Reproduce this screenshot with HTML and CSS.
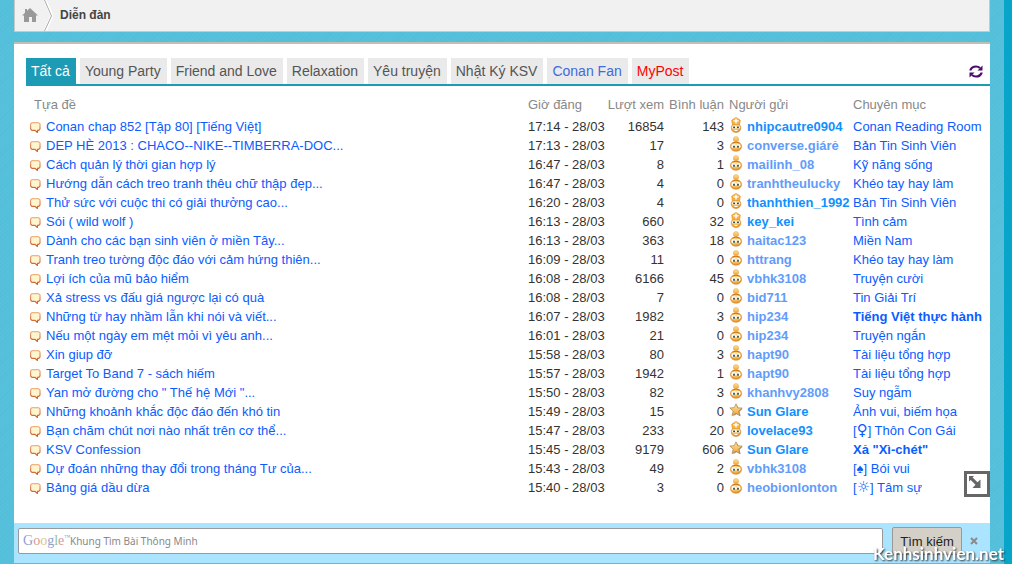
FILE: index.html
```html
<!DOCTYPE html>
<html lang="vi">
<head>
<meta charset="utf-8">
<meta name="viewport" content="width=device-width, initial-scale=1">
<title>Diễn đàn</title>
<link rel="stylesheet" href="styles.css">
</head>
<body>
<svg class="sprite" width="0" height="0" aria-hidden="true">
  <defs>
    <linearGradient id="bubble-line" x1="0" y1="0" x2="0" y2="1"><stop offset="0" stop-color="#efb487"/><stop offset="1" stop-color="#c95a28"/></linearGradient>
    <linearGradient id="gold" x1="0" y1="0" x2="0" y2="1"><stop offset="0" stop-color="#ffe9a6"/><stop offset="1" stop-color="#f0a030"/></linearGradient>
    <radialGradient id="face" cx=".45" cy=".35" r=".7"><stop offset="0" stop-color="#ffe6a0"/><stop offset=".6" stop-color="#f6b54e"/><stop offset="1" stop-color="#d9801a"/></radialGradient>
    <symbol id="bubble" viewBox="0 0 11 11"><path d="M2 .6h6.500L10 2v5L8.700 8.400H7.600L7.300 10.400 5 8.400H2L.6 7V2z" fill="#fff6cf" stroke="url(#bubble-line)" stroke-width="1.200"/></symbol>
    <symbol id="member" viewBox="0 0 12 16"><path d="M6 6c3.800 0 5.600 2 5.600 4.400S9.500 15.200 6 15.200.4 12.800.4 10.400 2.200 6 6 6z" fill="url(#face)" stroke="#d98a2c" stroke-width=".6"/><path d="M2.500 7Q6 5.300 9.500 7" fill="none" stroke="#c8741a"/><circle cx="6" cy="3.200" r="2.600" fill="url(#gold)" stroke="#eba23a" stroke-width=".6"/><circle cx="3.600" cy="10.200" r="2.100" fill="#fff"/><circle cx="8.400" cy="10.200" r="2.100" fill="#fff"/><path d="M3.200 9.800h1.600v2H3.200zM7.200 9.800h1.600v2H7.200z" fill="#173f35"/></symbol>
    <symbol id="bishop" viewBox="0 0 12 16"><path d="M6 6.500c3 0 4.800 2 4.800 4.400S9 15.400 6 15.400 1.200 13.300 1.200 10.900 3 6.500 6 6.500z" fill="url(#face)" stroke="#d98a2c" stroke-width=".6"/><path d="M2.500 8 1.700 3.200 6 .4l4.300 2.800L9.500 8Q6 6.600 2.500 8z" fill="#f8b03c" stroke="#e59326" stroke-width=".7"/><path d="M6 1.400v5M3.300 3.900h5.400" stroke="#fff" stroke-width="1.400"/><circle cx="3.900" cy="10.200" r="1.700" fill="#fff"/><circle cx="8.100" cy="10.200" r="1.700" fill="#fff"/><path d="M3.200 10.300h1.700M7.100 10.300h1.700" stroke="#173f35" stroke-width="1.700"/><path d="M4.500 13.500h3" stroke="#fff"/></symbol>
    <symbol id="star" viewBox="0 0 14 14"><path d="m8 2 1.600 3.500 4 .3-3 2.900 1 4.500L8 11l-3.800 2.200" fill="#777" opacity=".7"/><path d="m7 .8 1.700 4 4.500.3-3.500 3 1.200 4.600L7 10.300l-4 2.300 1.200-4.500L.8 5l4.400-.3z" fill="url(#gold)" stroke="#a58352" stroke-width=".7" stroke-linejoin="round"/></symbol>
  </defs>
</svg>
<div class="page">
  <nav class="crumbs" aria-label="Breadcrumb">
    <a class="home" href="#" aria-label="Trang chủ"><svg width="16" height="14" viewBox="0 0 16 14"><path d="M8 0 16 7.500h-2V14h-4V9H7v5H2V7.500H0L3 4.700V1h2v1.800z" fill="#999"/></svg></a>
    <svg class="chevron" width="9" height="31" viewBox="0 0 9 31" aria-hidden="true"><path d="M1 0 8 16 1 31" fill="none" stroke="#fff" stroke-width="3"/><path d="M.5 0 7.500 16 .5 31" fill="none" stroke="#aaa"/></svg>
    <a class="crumb" href="#">Diễn đàn</a>
  </nav>

  <main class="panel">
    <div class="tabs">
      <button class="tab active" type="button">Tất cả</button>
      <button class="tab" type="button">Young Party</button>
      <button class="tab" type="button">Friend and Love</button>
      <button class="tab" type="button">Relaxation</button>
      <button class="tab" type="button">Yêu truyện</button>
      <button class="tab" type="button">Nhật Ký KSV</button>
      <button class="tab conan" type="button">Conan Fan</button>
      <button class="tab mine" type="button">MyPost</button>
      <button class="refresh" type="button" aria-label="Làm mới"><svg width="14" height="13" viewBox="0 0 14 13"><path d="M1.500 5.500V5C2.400 2.800 4.500 1.500 7 1.500c1.700 0 3 .5 4 1.500M12.500 7.500V8c-.9 2.200-3 3.500-5.500 3.500-1.700 0-3-.5-4-1.500" fill="none" stroke="#4b0f6b" stroke-width="2.200"/><path d="M13.500.5v5h-5zM.5 12.500v-5h5z" fill="#4b0f6b"/></svg></button>
    </div>

    <table class="topics">
      <colgroup><col><col class="c-date"><col class="c-views"><col class="c-replies"><col class="c-user"><col class="c-forum"></colgroup>
      <thead><tr><th class="title-head">Tựa đề</th><th>Giờ đăng</th><th class="num">Lượt xem</th><th class="num">Bình luận</th><th class="user">Người gửi</th><th>Chuyên mục</th></tr></thead>
      <tbody>
      <tr><td><svg class="bubble"><use href="#bubble"/></svg><a href="#">Conan chap 852 [Tập 80] [Tiếng Việt]</a></td><td>17:14 - 28/03</td><td class="num">16854</td><td class="num">143</td><td class="user vip"><svg class="rank"><use href="#bishop"/></svg><a href="#">nhipcautre0904</a></td><td><a href="#">Conan Reading Room</a></td></tr>
      <tr><td><svg class="bubble"><use href="#bubble"/></svg><a href="#">DEP HÈ 2013 : CHACO--NIKE--TIMBERRA-DOC...</a></td><td>17:13 - 28/03</td><td class="num">17</td><td class="num">3</td><td class="user"><svg class="rank"><use href="#member"/></svg><a href="#">converse.giárẻ</a></td><td><a href="#">Bản Tin Sinh Viên</a></td></tr>
      <tr><td><svg class="bubble"><use href="#bubble"/></svg><a href="#">Cách quản lý thời gian hợp lý</a></td><td>16:47 - 28/03</td><td class="num">8</td><td class="num">1</td><td class="user"><svg class="rank"><use href="#member"/></svg><a href="#">mailinh_08</a></td><td><a href="#">Kỹ năng sống</a></td></tr>
      <tr><td><svg class="bubble"><use href="#bubble"/></svg><a href="#">Hướng dẫn cách treo tranh thêu chữ thập đẹp...</a></td><td>16:47 - 28/03</td><td class="num">4</td><td class="num">0</td><td class="user"><svg class="rank"><use href="#member"/></svg><a href="#">tranhtheulucky</a></td><td><a href="#">Khéo tay hay làm</a></td></tr>
      <tr><td><svg class="bubble"><use href="#bubble"/></svg><a href="#">Thử sức với cuộc thi có giải thưởng cao...</a></td><td>16:20 - 28/03</td><td class="num">4</td><td class="num">0</td><td class="user vip"><svg class="rank"><use href="#bishop"/></svg><a href="#">thanhthien_1992</a></td><td><a href="#">Bản Tin Sinh Viên</a></td></tr>
      <tr><td><svg class="bubble"><use href="#bubble"/></svg><a href="#">Sói ( wild wolf )</a></td><td>16:13 - 28/03</td><td class="num">660</td><td class="num">32</td><td class="user vip"><svg class="rank"><use href="#bishop"/></svg><a href="#">key_kei</a></td><td><a href="#">Tình cảm</a></td></tr>
      <tr><td><svg class="bubble"><use href="#bubble"/></svg><a href="#">Dành cho các bạn sinh viên ở miền Tây...</a></td><td>16:13 - 28/03</td><td class="num">363</td><td class="num">18</td><td class="user"><svg class="rank"><use href="#member"/></svg><a href="#">haitac123</a></td><td><a href="#">Miền Nam</a></td></tr>
      <tr><td><svg class="bubble"><use href="#bubble"/></svg><a href="#">Tranh treo tường độc đáo với cảm hứng thiên...</a></td><td>16:09 - 28/03</td><td class="num">11</td><td class="num">0</td><td class="user"><svg class="rank"><use href="#member"/></svg><a href="#">httrang</a></td><td><a href="#">Khéo tay hay làm</a></td></tr>
      <tr><td><svg class="bubble"><use href="#bubble"/></svg><a href="#">Lợi ích của mũ bảo hiểm</a></td><td>16:08 - 28/03</td><td class="num">6166</td><td class="num">45</td><td class="user"><svg class="rank"><use href="#member"/></svg><a href="#">vbhk3108</a></td><td><a href="#">Truyện cười</a></td></tr>
      <tr><td><svg class="bubble"><use href="#bubble"/></svg><a href="#">Xả stress vs đấu giá ngược lại có quà</a></td><td>16:08 - 28/03</td><td class="num">7</td><td class="num">0</td><td class="user"><svg class="rank"><use href="#member"/></svg><a href="#">bid711</a></td><td><a href="#">Tin Giải Trí</a></td></tr>
      <tr><td><svg class="bubble"><use href="#bubble"/></svg><a href="#">Những từ hay nhầm lẫn khi nói và viết...</a></td><td>16:07 - 28/03</td><td class="num">1982</td><td class="num">3</td><td class="user"><svg class="rank"><use href="#member"/></svg><a href="#">hip234</a></td><td class="hot"><a href="#">Tiếng Việt thực hành</a></td></tr>
      <tr><td><svg class="bubble"><use href="#bubble"/></svg><a href="#">Nếu một ngày em mệt mỏi vì yêu anh...</a></td><td>16:01 - 28/03</td><td class="num">21</td><td class="num">0</td><td class="user"><svg class="rank"><use href="#member"/></svg><a href="#">hip234</a></td><td><a href="#">Truyện ngắn</a></td></tr>
      <tr><td><svg class="bubble"><use href="#bubble"/></svg><a href="#">Xin giup đỡ</a></td><td>15:58 - 28/03</td><td class="num">80</td><td class="num">3</td><td class="user"><svg class="rank"><use href="#member"/></svg><a href="#">hapt90</a></td><td><a href="#">Tài liệu tổng hợp</a></td></tr>
      <tr><td><svg class="bubble"><use href="#bubble"/></svg><a href="#">Target To Band 7 - sách hiếm</a></td><td>15:57 - 28/03</td><td class="num">1942</td><td class="num">1</td><td class="user"><svg class="rank"><use href="#member"/></svg><a href="#">hapt90</a></td><td><a href="#">Tài liệu tổng hợp</a></td></tr>
      <tr><td><svg class="bubble"><use href="#bubble"/></svg><a href="#">Yan mở đường cho " Thế hệ Mới "...</a></td><td>15:50 - 28/03</td><td class="num">82</td><td class="num">3</td><td class="user"><svg class="rank"><use href="#member"/></svg><a href="#">khanhvy2808</a></td><td><a href="#">Suy ngẫm</a></td></tr>
      <tr><td><svg class="bubble"><use href="#bubble"/></svg><a href="#">Những khoảnh khắc độc đáo đến khó tin</a></td><td>15:49 - 28/03</td><td class="num">15</td><td class="num">0</td><td class="user vip"><svg class="rank"><use href="#star"/></svg><a href="#">Sun Glare</a></td><td><a href="#">Ảnh vui, biếm họa</a></td></tr>
      <tr><td><svg class="bubble"><use href="#bubble"/></svg><a href="#">Bạn chăm chút nơi nào nhất trên cơ thể...</a></td><td>15:47 - 28/03</td><td class="num">233</td><td class="num">20</td><td class="user vip"><svg class="rank"><use href="#bishop"/></svg><a href="#">lovelace93</a></td><td><a href="#">[<span class="glyph">♀</span>] Thôn Con Gái</a></td></tr>
      <tr><td><svg class="bubble"><use href="#bubble"/></svg><a href="#">KSV Confession</a></td><td>15:45 - 28/03</td><td class="num">9179</td><td class="num">606</td><td class="user vip"><svg class="rank"><use href="#star"/></svg><a href="#">Sun Glare</a></td><td class="hot"><a href="#">Xả "Xì-chét"</a></td></tr>
      <tr><td><svg class="bubble"><use href="#bubble"/></svg><a href="#">Dự đoán những thay đổi trong tháng Tư của...</a></td><td>15:43 - 28/03</td><td class="num">49</td><td class="num">2</td><td class="user"><svg class="rank"><use href="#member"/></svg><a href="#">vbhk3108</a></td><td><a href="#">[♠] Bói vui</a></td></tr>
      <tr><td><svg class="bubble"><use href="#bubble"/></svg><a href="#">Bảng giá dầu dừa</a></td><td>15:40 - 28/03</td><td class="num">3</td><td class="num">0</td><td class="user"><svg class="rank"><use href="#member"/></svg><a href="#">heobionlonton</a></td><td><a href="#">[<span class="glyph">☼</span>] Tâm sự</a></td></tr>
      </tbody>
    </table>
    <button class="expand" type="button" aria-label="Mở rộng"><svg width="12" height="12" viewBox="0 0 12 12"><path d="M0 0h5L3.600 1.600 8.500 6.300 11.500 3.500V12H3.500l3-3.200L1.700 4 0 5.500z" fill="#666"/></svg></button>
  </main>

  <form class="search">
    <label class="field"><span class="logo"><span class="g-blue">G</span><span class="g-red">o</span><span class="g-gold">o</span><span class="g-blue">g</span><span class="g-green">l</span><span class="g-red">e</span><span class="tm">™</span></span><input type="text" placeholder="Khung Tìm Bài Thông Minh" aria-label="Khung Tìm Bài Thông Minh"></label>
    <button class="go" type="button">Tìm kiếm</button>
    <button class="close" type="button" aria-label="Đóng"><svg width="8" height="8" viewBox="0 0 8 8"><path d="m1 1 6 6M7 1 1 7" stroke="#8a8a8a" stroke-width="2"/></svg></button>
  </form>
</div>
<div class="watermark">Kenhsinhvien.net</div>
</body>
</html>
```
FILE: styles.css
```css
* { box-sizing: border-box; }

body {
  margin: 0;
  min-height: 100vh;
  overflow: hidden;
  background: #07a5ca;
  color: #333;
  font: 13px/19px "Liberation Sans", Arial, sans-serif;
}

a { color: #0b5cff; text-decoration: none; }
button { margin: 0; padding: 0; border: 0; background: none; font: inherit; color: inherit; }
svg { display: block; }
.sprite { position: absolute; }

.page {
  min-height: 100vh;
  margin-right: 8px;
  padding: 0 14px;
  background-color: #57c1db;
  background-image: repeating-linear-gradient(135deg, #53bed9 0 1px, transparent 1px 3px);
}

/* Breadcrumb */
.crumbs {
  display: flex;
  align-items: center;
  height: 32px;
  margin-bottom: 10px;
  border: solid #c8c8c8;
  border-width: 0 1px 1px;
  background: #f1f1f1;
}
.home { padding: 0 6px 2px 7px; }
.chevron { margin-right: 7px; }
.crumb { color: #444; font-size: 12px; font-weight: bold; }

/* Topic panel */
.panel {
  position: relative;
  padding: 14px 0 26px 12px;
  border-top: 2px solid #c4beb2;
  background: #fff;
}
.tabs {
  display: flex;
  gap: 4px;
  border-bottom: 2px solid #1d9bb4;
}
.tab {
  height: 26px;
  padding: 0 6px 0 5px;
  background: #eaeaea;
  color: #555;
  font-size: 14px;
  white-space: nowrap;
}
.tab.active { background: #1d9bb4; color: #fff; }
.tab.conan { color: #4169e1; }
.tab.mine { color: #f00; }
.refresh { margin: 0 7px 0 auto; }

.topics {
  width: 100%;
  margin-top: 9px;
  border-collapse: collapse;
  table-layout: fixed;
}
.c-date { width: 78px; }
.c-views { width: 58px; }
.c-replies { width: 60px; }
.c-user { width: 129px; }
.c-forum { width: 137px; }
th, td { height: 19px; padding: 0; text-align: left; white-space: nowrap; }
th { height: 22px; padding-bottom: 3px; color: #888; font-weight: normal; }
.title-head { padding-left: 8px; }
.num { text-align: right; }
.user { padding-left: 5px; }
td.user a { color: #629cfb; font-weight: bold; }
td.vip a { color: #1190ff; }
.hot { font-weight: bold; }
.glyph { font: 15px/16px "DejaVu Sans", sans-serif; }

.bubble, .rank { display: inline-block; }
.bubble { width: 11px; height: 11px; margin: 0 5px 0 4px; vertical-align: -2px; }
.rank { width: 14px; height: 16px; margin: 0 4px 0 0; vertical-align: -2px; }

.expand {
  position: absolute;
  right: 0;
  bottom: 26px;
  width: 26px;
  height: 26px;
  padding: 2px;
  border: 3px solid #666;
  background: #fff;
}
.expand svg { margin-bottom: 4px; }

/* Search bar */
.search {
  display: flex;
  align-items: center;
  height: 40px;
  padding: 0 12px 4px 4px;
  background: #abe4ff;
}
.field {
  display: flex;
  flex: 1;
  align-items: center;
  height: 26px;
  margin-right: 9px;
  padding: 0 4px;
  border: 1px solid #999;
  border-radius: 2px;
  background: #fff;
}
.field input {
  flex: 1;
  min-width: 0;
  padding: 0;
  border: 0;
  outline: 0;
  background: none;
  font: 10px/20px "Noto Sans", sans-serif;
}
.field input::placeholder { color: #888; opacity: 1; }
.logo { display: flex; width: 47px; font: 14px/20px "Liberation Serif", serif; }
.tm { font-size: 6px; line-height: 12px; color: #999; }
.g-blue { color: #8e9fd0; }
.g-red { color: #d8989c; }
.g-gold { color: #d9c880; }
.g-green { color: #95c295; }
.go {
  height: 28px;
  width: 70px;
  border: 1px solid #999;
  border-radius: 2px;
  background: #d4d0c8;
  color: #222;
}
.close { margin-left: 8px; }

.watermark {
  position: fixed;
  right: 8px;
  bottom: 0;
  color: #fff;
  font: bold 17px/20px Lato, sans-serif;
  text-shadow: 1px 1px 2px #333;
  pointer-events: none;
}
```
